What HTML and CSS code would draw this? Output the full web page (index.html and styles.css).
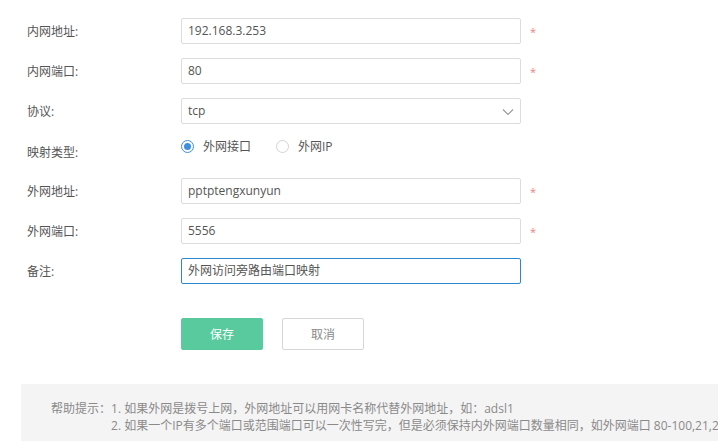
FILE: index.html
```html
<!DOCTYPE html>
<html lang="zh-CN">
<head>
<meta charset="utf-8">
<link rel="stylesheet" href="styles.css">
</head>
<body>
<div class="form">
  <div class="row">
    <label class="lbl">内网地址:</label>
    <div class="field"><div class="input">192.168.3.253</div></div>
    <span class="req">*</span>
  </div>
  <div class="row">
    <label class="lbl">内网端口:</label>
    <div class="field"><div class="input">80</div></div>
    <span class="req">*</span>
  </div>
  <div class="row">
    <label class="lbl">协议:</label>
    <div class="field"><div class="input select">tcp
      <svg class="chev" width="12" height="8" viewBox="0 0 12 8"><path d="M1 1.5 L6 6.5 L11 1.5" fill="none" stroke="#999" stroke-width="1.1"/></svg></div></div>
  </div>
  <div class="row radio-row">
    <label class="lbl">映射类型:</label>
    <div class="radios">
      <span class="radio on"></span><span class="rtext">外网接口</span>
      <span class="radio"></span><span class="rtext">外网IP</span>
    </div>
  </div>
  <div class="row">
    <label class="lbl">外网地址:</label>
    <div class="field"><div class="input">pptptengxunyun</div></div>
    <span class="req">*</span>
  </div>
  <div class="row">
    <label class="lbl">外网端口:</label>
    <div class="field"><div class="input">5556</div></div>
    <span class="req">*</span>
  </div>
  <div class="row">
    <label class="lbl">备注:</label>
    <div class="field"><div class="input focus">外网访问旁路由端口映射</div></div>
  </div>
  <div class="buttons">
    <button class="btn save">保存</button>
    <button class="btn cancel">取消</button>
  </div>
</div>
<div class="help">
  <span class="help-title">帮助提示：</span>
  <div class="help-lines">
    <div>1. 如果外网是拨号上网，外网地址可以用网卡名称代替外网地址，如：adsl1</div>
    <div>2. 如果一个IP有多个端口或范围端口可以一次性写完，但是必须保持内外网端口数量相同，如外网端口 80-100,21,23</div>
  </div>
</div>
</body>
</html>
```
FILE: styles.css
```css
html, body {
  margin: 0;
  padding: 0;
  overflow: hidden;
  background: #fff;
}
body {
  font-family: "Open Sans", "Noto Sans CJK SC", sans-serif;
  font-size: 12px;
  color: #555;
  width: 718px;
  height: 441px;
}
.form {
  padding: 18px 0 0 27px;
}
.row {
  display: flex;
  align-items: center;
  height: 26px;
  margin-bottom: 14px;
}
.lbl {
  width: 154px;
  flex: none;
  color: #555;
}
.field {
  width: 340px;
}
.input {
  box-sizing: border-box;
  height: 26px;
  border: 1px solid #dcdcdc;
  border-radius: 2px;
  padding: 0 6px;
  line-height: 24px;
  color: #555;
  white-space: nowrap;
}
.input.focus {
  border-color: #2b88d0;
}
.select {
  position: relative;
}
.chev {
  position: absolute;
  right: 6px;
  top: 9px;
}
.req {
  color: #f08080;
  margin-left: 9px;
  font-size: 11px;
  line-height: 1;
  padding-top: 1px;
}
.radio-row {
  align-items: flex-start;
}
.radio-row .lbl {
  padding-top: 6px;
  line-height: 17px;
}
.radios {
  display: flex;
  align-items: center;
  margin-top: 0;
  height: 16px;
}
.radio {
  box-sizing: border-box;
  width: 13px;
  height: 13px;
  border-radius: 50%;
  border: 1px solid #d4d4d4;
  background: #fff;
  position: relative;
}
.radio.on {
  border-color: #3f8ede;
}
.radio.on::after {
  content: "";
  position: absolute;
  left: 2px;
  top: 2px;
  width: 7px;
  height: 7px;
  border-radius: 50%;
  background: #3f8ede;
}
.rtext {
  margin-left: 9px;
  margin-right: 25px;
}
.buttons {
  display: flex;
  gap: 19px;
  margin-left: 154px;
  margin-top: 34px;
}
.btn {
  box-sizing: border-box;
  width: 82px;
  height: 32px;
  border-radius: 2px;
  font-family: "Open Sans", "Noto Sans CJK SC", sans-serif;
  font-size: 12px;
  padding: 0;
}
.save {
  background: #58ca9e;
  border: 1px solid #58ca9e;
  color: #fff;
}
.cancel {
  background: #fff;
  border: 1px solid #d6d6d6;
  color: #8a8a8a;
}
.help {
  display: flex;
  margin: 34px 0 0 21px;
  padding: 16px 0 20px 30px;
  background: #f4f4f4;
  color: #8a8a8a;
  white-space: nowrap;
  line-height: 17px;
}
.help-title {
  flex: none;
}
```
